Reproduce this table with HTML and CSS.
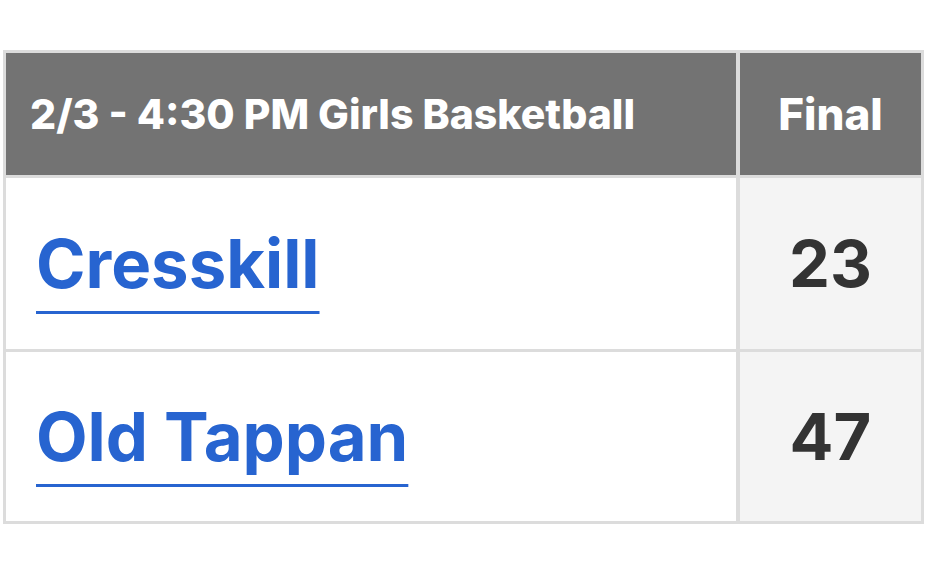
FILE: index.html
```html
<!DOCTYPE html>
<html>
<head>
<meta charset="utf-8">
<link rel="stylesheet" href="styles.css">
</head>
<body>
<div class="wrap">
<table class="score">
  <thead>
    <tr class="head-row">
      <th class="game">2/3 - 4:30 PM Girls Basketball</th>
      <th class="status">Final</th>
    </tr>
  </thead>
  <tbody>
    <tr class="row row-1">
      <td class="team"><a href="#">Cresskill</a></td>
      <td class="pts">23</td>
    </tr>
    <tr class="row row-2">
      <td class="team"><a href="#">Old Tappan</a></td>
      <td class="pts">47</td>
    </tr>
  </tbody>
</table>
</div>
</body>
</html>
```

FILE: styles.css
```css
html, body {
  margin: 0;
  padding: 0;
  background: #fff;
}
.wrap {
  padding: 50px 4px 0 3px;
}
.score {
  width: 921px;
  border-collapse: separate;
  border-spacing: 0;
  border: 3px solid #dcdcdc;
  font-family: Inter, "Noto Sans", sans-serif;
  table-layout: fixed;
}
.score th, .score td {
  padding: 0;
  vertical-align: middle;
  box-sizing: border-box;
}
.head-row th {
  background: #737373;
  color: #fff;
  font-weight: 800;
  height: 125px;
  border-bottom: 3px solid #dcdcdc;
}
.game {
  width: 734px;
  text-align: left;
  font-size: 41px;
  padding-left: 24px !important;
  border-right: 4px solid #dcdcdc;
}
.status {
  text-align: center;
  font-size: 44px;
}
.row-1 td {
  height: 174px;
  border-bottom: 3px solid #dcdcdc;
}
.row-2 td {
  height: 169px;
}
.team {
  padding-left: 30px !important;
  border-right: 4px solid #dcdcdc;
  font-size: 67px;
  font-weight: 700;
}
.team a {
  color: #2764d0;
  text-decoration: underline;
  text-decoration-thickness: 3px;
  text-underline-offset: 23px;
}
.pts {
  background: #f4f4f4;
  text-align: center;
  color: #333;
  font-size: 65px;
  font-weight: 700;
}
```
